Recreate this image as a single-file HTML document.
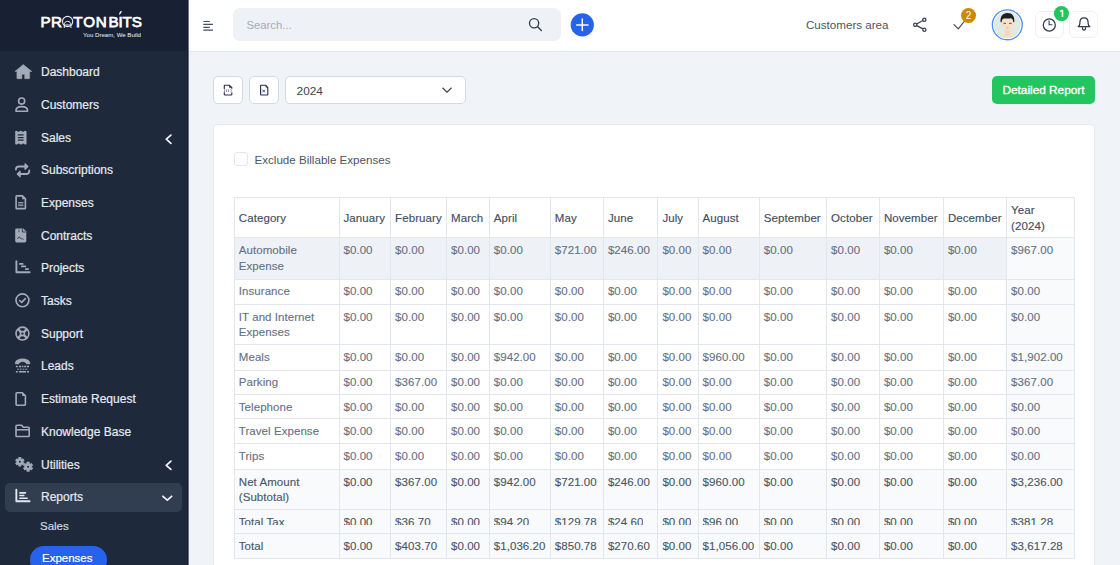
<!DOCTYPE html>
<html><head><meta charset="utf-8">
<style>
*{box-sizing:border-box;margin:0;padding:0}
html,body{width:1120px;height:565px;overflow:hidden}
body{font-family:"Liberation Sans",sans-serif;background:#f0f3f8;position:relative;color:#475569}
.abs{position:absolute}
#sb{position:absolute;left:0;top:0;width:188px;height:565px;background:#1e293b;border-right:1px solid #172033}
#sbe{position:absolute;left:188px;top:0;width:1px;height:565px;background:#6d7483}
#logo{position:absolute;left:0;top:0;width:187px;height:51px;background:#182133}
.lg1{position:absolute;left:41px;top:12px;font-weight:bold;font-size:15px;color:#fff;line-height:18px;white-space:nowrap}
.lg2{position:absolute;left:83px;top:30.5px;font-size:6.1px;color:#f3f4f6;line-height:8px;white-space:nowrap}
.mi{position:absolute;left:0;width:188px;height:32.7px;line-height:32.7px;font-size:12px;color:#e5e9f0;white-space:nowrap}
.mi span{position:absolute;left:41px;top:0;-webkit-text-stroke:0.2px #e5e9f0}
.mi svg{position:absolute}
#rep{position:absolute;left:5px;top:483px;width:177px;height:29px;background:#313d51;border-radius:5px}
.sub{position:absolute;font-size:11.5px;color:#cfd5de;white-space:nowrap;line-height:14px;-webkit-text-stroke:0.2px currentColor}
#pill{position:absolute;left:29.5px;top:545.5px;width:77px;height:28px;border-radius:14px;background:#2563eb}
#top{position:absolute;left:189px;top:0;width:931px;height:52px;background:#fff;border-bottom:1px solid #e3e8ef}
#search{position:absolute;left:233px;top:8px;width:327.5px;height:33px;background:#eef1f6;border-radius:7px}
.ph{position:absolute;left:246.5px;top:18px;font-size:11.3px;color:#a3abba;line-height:14px}
.tbtn{position:absolute;top:76px;height:27.5px;background:#fff;border:1px solid #d5dbe5;border-radius:5px}
#card{position:absolute;left:213px;top:124px;width:881.5px;height:460px;background:#fff;border:1px solid #e6eaf0;border-radius:4px}
.vl{width:1px;background:#e2e7ee}
.hl{height:1px;background:#e2e7ee}
.th{position:absolute;-webkit-text-stroke:0.15px currentColor;font-size:11.5px;letter-spacing:0.08px;line-height:16px;color:#434e5e;white-space:nowrap}
.td{position:absolute;-webkit-text-stroke:0.12px currentColor;font-size:11.5px;letter-spacing:0.06px;line-height:15.5px;color:#667184;white-space:nowrap}
.td.dk{color:#4a5566}
.clip{height:10px;overflow:hidden}
.badge{position:absolute;border-radius:50%;color:#fff;font-size:10px;text-align:center}
</style></head><body>
<div id="sb">
  <div id="logo">
    <svg class="abs" style="left:0;top:0" width="188" height="51" viewBox="0 0 188 51"><g font-family="Liberation Sans" font-size="15.2" fill="#fff" stroke="#fff" stroke-width="0.75"><text y="26.8" x="40.4 50.9">PR</text><text y="26.8" x="73.2 83.2 95.7 108.6 118.6 122.6 131.8">TONBITS</text></g><path d="M119.5 14.3 Q119.8 12 121.2 11.1 Q121.4 13.2 119.5 14.3Z" fill="#fff" stroke="#fff" stroke-width="0.8" stroke-linejoin="round"/><circle cx="67.6" cy="21.5" r="5.1" fill="none" stroke="#e6e9ee" stroke-width="1.1"/><path d="M64.3 28 V24.8 C64.3 22.6 65.6 21.4 67.6 21.4 C69.6 21.4 70.9 22.6 70.9 24.8 V28 M64.5 25 H70.7" fill="none" stroke="#e6e9ee" stroke-width="1"/></svg>
    <div class="lg2">You Dream, We Build</div>
  </div>
  <div id="rep"></div>
<div class="mi" style="top:56.10px"><svg width="188" height="33" viewBox="0 56.10 188 33" style="left:0;top:0"><path d="M23.26 64.7 L31.9 71.6 H29.6 V78.3 Q29.6 78.8 29.1 78.8 H24.7 V74.4 H21.9 V78.8 H17.4 Q16.9 78.8 16.9 78.3 V71.6 H14.9 Z" fill="#a3abb8" stroke="#a3abb8" stroke-width="0.5" stroke-linejoin="round"/></svg><span>Dashboard</span></div>
<div class="mi" style="top:88.80px"><svg width="188" height="33" viewBox="0 88.80 188 33" style="left:0;top:0"><circle cx="21.65" cy="100.85" r="3.05" fill="none" stroke="#a3abb8" stroke-width="1.6"/><path d="M16 111 V110.2 C16 107.6 18.5 106.4 21.7 106.4 C24.9 106.4 27.5 107.6 27.5 110.2 V111 Z" fill="none" stroke="#a3abb8" stroke-width="1.6" stroke-linejoin="round"/></svg><span>Customers</span></div>
<div class="mi" style="top:121.50px"><svg width="188" height="33" viewBox="0 121.50 188 33" style="left:0;top:0"><path d="M15.2 130.8 Q16.3 129.8 17.4 130.8 Q18.5 131.8 19.6 130.8 Q20.7 129.8 21.8 130.8 Q22.9 131.8 24 130.8 Q25.2 129.8 26.5 130.8 V143.6 Q25.4 144.6 24.3 143.6 Q23.2 142.6 22.1 143.6 Q21 144.6 19.9 143.6 Q18.8 142.6 17.7 143.6 Q16.5 144.6 15.2 143.6 Z" fill="#a3abb8"/><path d="M18.2 134.4 H23.2 M18.2 137.1 H23.2 M18.2 139.6 H23.2" stroke="#1e293b" stroke-width="1.2" stroke-linecap="round"/><path d="M170.9 134.6 L166.3 138.7 L170.9 142.8" fill="none" stroke="#eef1f5" stroke-width="1.8" stroke-linecap="round" stroke-linejoin="round"/></svg><span>Sales</span></div>
<div class="mi" style="top:154.20px"><svg width="188" height="33" viewBox="0 154.20 188 33" style="left:0;top:0"><path d="M15.9 169.8 C15.9 167.8 17 166.7 19 166.7 H25.5 M29.3 170.6 C29.3 172.8 28.2 174.2 26.2 174.2 H19.6" fill="none" stroke="#a3abb8" stroke-width="1.8" stroke-linecap="round" stroke-linejoin="round"/><path d="M25 163.9 L27.9 166.7 L25 169.5 Z M20.1 171.4 L17.3 174.2 L20.1 177 Z" fill="#a3abb8" stroke="#a3abb8" stroke-width="1.1" stroke-linejoin="round"/></svg><span>Subscriptions</span></div>
<div class="mi" style="top:186.90px"><svg width="188" height="33" viewBox="0 186.90 188 33" style="left:0;top:0"><path d="M16.1 196.5 Q16.1 195.8 16.8 195.8 H22.4 L25.4 198.8 V207.8 Q25.4 208.5 24.7 208.5 H16.8 Q16.1 208.5 16.1 207.8 Z" fill="none" stroke="#a3abb8" stroke-width="1.6" stroke-linejoin="round"/><path d="M22.2 195.8 V199.1 H25.4 Z" fill="#a3abb8"/><path d="M18.1 202.4 H23.4 M18.1 204 H23.4 M18.1 205.6 H23.4" stroke="#a3abb8" stroke-width="0.9"/></svg><span>Expenses</span></div>
<div class="mi" style="top:219.60px"><svg width="188" height="33" viewBox="0 219.60 188 33" style="left:0;top:0"><path d="M16.6 228 H23.3 L26.3 231.2 V240.6 Q26.3 242 24.9 242 H16.6 Q15.2 242 15.2 240.6 V229.4 Q15.2 228 16.6 228 Z" fill="#a3abb8"/><path d="M22.4 228.4 V231.6 H25.9" fill="none" stroke="#1e293b" stroke-width="0.8"/><path d="M17.4 238.6 Q18.6 236 19.5 236.5 Q20.4 238.5 21.5 238.4 Q22.6 238.2 23.6 238.9" fill="none" stroke="#1e293b" stroke-width="0.8"/><path d="M18.3 229.7 H19.5 M18.3 231.3 H19.5" stroke="#1e293b" stroke-width="0.7"/></svg><span>Contracts</span></div>
<div class="mi" style="top:252.30px"><svg width="188" height="33" viewBox="0 252.30 188 33" style="left:0;top:0"><path d="M16.4 261.4 V272.6 H29.6" fill="none" stroke="#a3abb8" stroke-width="1.9" stroke-linecap="round" stroke-linejoin="round"/><path d="M19.8 264.2 H22.7 M21.8 266.7 H25.3 M25.8 269.4 H28.1" stroke="#a3abb8" stroke-width="1.8" stroke-linecap="round"/></svg><span>Projects</span></div>
<div class="mi" style="top:285.00px"><svg width="188" height="33" viewBox="0 285.00 188 33" style="left:0;top:0"><circle cx="22.45" cy="300.35" r="6.45" fill="none" stroke="#a3abb8" stroke-width="1.6"/><path d="M19.6 300.5 L21.7 302.4 L25.3 298.6" fill="none" stroke="#a3abb8" stroke-width="1.6" stroke-linecap="round" stroke-linejoin="round"/></svg><span>Tasks</span></div>
<div class="mi" style="top:317.70px"><svg width="188" height="33" viewBox="0 317.70 188 33" style="left:0;top:0"><circle cx="22.45" cy="333.3" r="6.45" fill="none" stroke="#a3abb8" stroke-width="1.6"/><circle cx="22.45" cy="333.3" r="2" fill="none" stroke="#a3abb8" stroke-width="1.6"/><path d="M17.9 328.75 L21 331.85 M27 328.75 L23.9 331.85 M17.9 337.85 L21 334.75 M27 337.85 L23.9 334.75" stroke="#a3abb8" stroke-width="2.3"/></svg><span>Support</span></div>
<div class="mi" style="top:350.40px"><svg width="188" height="33" viewBox="0 350.40 188 33" style="left:0;top:0"><path d="M15.2 363.8 C15.2 360.8 18.5 359.2 22.6 359.2 C26.7 359.2 30 360.8 30 363.8 V364.3 H26.6 L25.7 363.4 C25.2 362.6 24 362.1 22.6 362.1 C21.2 362.1 20 362.6 19.5 363.4 L18.6 364.3 H15.2 Z" fill="#a3abb8" stroke="#a3abb8" stroke-width="0.4" stroke-linejoin="round"/><path d="M15.9 367 H17.7 M18.8 367 H21.2 M21.9 367 H23.4 M24.1 367 H26.3 M27 367 H29 M15.9 372.1 H17.7 M18.8 372.1 H26.1 M27 372.1 H29" stroke="#a3abb8" stroke-width="1.5"/><path d="M17.2 369.6 H19.2 M19.9 369.6 H21.7 M22.5 369.6 H24.3 M25.1 369.6 H27.2" stroke="#a3abb8" stroke-width="0.9"/></svg><span>Leads</span></div>
<div class="mi" style="top:383.10px"><svg width="188" height="33" viewBox="0 383.10 188 33" style="left:0;top:0"><path d="M16.1 393.5 Q16.1 392.8 16.8 392.8 H22.4 L25.4 395.8 V404.6 Q25.4 405.3 24.7 405.3 H16.8 Q16.1 405.3 16.1 404.6 Z" fill="none" stroke="#a3abb8" stroke-width="1.6" stroke-linejoin="round"/><path d="M22.2 392.8 V396.1 H25.4 Z" fill="#a3abb8"/></svg><span>Estimate Request</span></div>
<div class="mi" style="top:415.80px"><svg width="188" height="33" viewBox="0 415.80 188 33" style="left:0;top:0"><path d="M16 426 Q16 425 17 425 H21.6 L23.3 427 H28.4 Q29.2 427 29.2 427.8 V435.5 Q29.2 436.3 28.4 436.3 H16.8 Q16 436.3 16 435.5 Z" fill="none" stroke="#a3abb8" stroke-width="1.6" stroke-linejoin="round"/><path d="M16 429.6 H29.2" stroke="#a3abb8" stroke-width="1.5"/></svg><span>Knowledge Base</span></div>
<div class="mi" style="top:448.50px"><svg width="188" height="33" viewBox="0 448.50 188 33" style="left:0;top:0"><path d="M18.86 458.36 L18.72 457.05 L21.00 457.05 L20.86 458.36 L21.41 458.62 L21.90 458.97 L22.97 458.19 L24.11 460.16 L22.90 460.70 L22.96 461.30 L22.90 461.90 L24.11 462.44 L22.97 464.41 L21.90 463.63 L21.41 463.98 L20.86 464.24 L21.00 465.55 L18.72 465.55 L18.86 464.24 L18.31 463.98 L17.82 463.63 L16.75 464.41 L15.61 462.44 L16.82 461.90 L16.76 461.30 L16.82 460.70 L15.61 460.16 L16.75 458.19 L17.82 458.97 L18.31 458.62 Z" fill="#a3abb8" stroke="#a3abb8" stroke-width="0.9" stroke-linejoin="round"/><circle cx="19.86" cy="461.3" r="0.95" fill="#1e293b"/><path d="M27.04 463.08 L26.88 461.66 L29.32 461.66 L29.16 463.08 L29.75 463.34 L30.28 463.72 L31.42 462.88 L32.64 464.98 L31.34 465.56 L31.40 466.20 L31.34 466.84 L32.64 467.42 L31.42 469.52 L30.28 468.68 L29.75 469.06 L29.16 469.32 L29.32 470.74 L26.88 470.74 L27.04 469.32 L26.45 469.06 L25.92 468.68 L24.78 469.52 L23.56 467.42 L24.86 466.84 L24.80 466.20 L24.86 465.56 L23.56 464.98 L24.78 462.88 L25.92 463.72 L26.45 463.34 Z" fill="#a3abb8" stroke="#a3abb8" stroke-width="0.9" stroke-linejoin="round"/><circle cx="28.1" cy="466.2" r="1" fill="#1e293b"/><g transform="translate(0 326.1)"><path d="M170.9 134.6 L166.3 138.7 L170.9 142.8" fill="none" stroke="#eef1f5" stroke-width="1.8" stroke-linecap="round" stroke-linejoin="round"/></g></svg><span>Utilities</span></div>
<div class="mi" style="top:481.20px"><svg width="188" height="33" viewBox="0 481.20 188 33" style="left:0;top:0"><path d="M16.35 489.9 V501.4 H29.6" fill="none" stroke="#e3e7ed" stroke-width="1.9" stroke-linecap="round" stroke-linejoin="round"/><path d="M19.9 493.1 H25.4 M19.9 495.7 H23.8 M19.9 498.4 H27.1" stroke="#e3e7ed" stroke-width="1.6" stroke-linecap="round"/><path d="M162.9 496.5 L167.3 500.4 L171.6 496.5" fill="none" stroke="#eef1f5" stroke-width="1.8" stroke-linecap="round" stroke-linejoin="round"/></svg><span>Reports</span></div>
  <div class="sub" style="left:40px;top:519px">Sales</div>
  <div id="pill"></div>
  <div class="sub" style="left:42px;top:551px;color:#fff">Expenses</div>
</div>
<div id="sbe"></div>
<div id="top"></div>
<svg class="abs" style="left:203px;top:20px" width="11" height="12" viewBox="0 0 11 12"><path d="M0.3 1.5 H6.8 M0.3 4.4 H10 M0.3 7.4 H6.8 M0.3 10.1 H10" stroke="#465063" stroke-width="1.2"/></svg>
<div id="search"></div>
<div class="ph">Search...</div>
<svg class="abs" style="left:527px;top:17px" width="16" height="16" viewBox="0 0 16 16"><circle cx="7.1" cy="6.2" r="4.6" fill="none" stroke="#333c4a" stroke-width="1.35"/><path d="M10.5 9.6 L14.3 13.4" stroke="#333c4a" stroke-width="1.4" stroke-linecap="round"/></svg>
<svg class="abs" style="left:570px;top:12.5px" width="25" height="25" viewBox="0 0 25 25"><circle cx="12.3" cy="11.9" r="11.6" fill="#2563eb"/><path d="M12.3 6 V17.6 M6.7 11.9 H18" stroke="#fff" stroke-width="1.5" stroke-linecap="round"/></svg>
<div class="abs" style="left:806px;top:18px;font-size:11.6px;line-height:14px;color:#4b5563;white-space:nowrap">Customers area</div>
<svg class="abs" style="left:912px;top:16.5px" width="16" height="16" viewBox="0 0 16 16"><circle cx="12.35" cy="2.7" r="1.6" fill="none" stroke="#3b4352" stroke-width="1.3"/><circle cx="3.2" cy="7.8" r="1.6" fill="none" stroke="#3b4352" stroke-width="1.3"/><circle cx="12.35" cy="12.7" r="1.6" fill="none" stroke="#3b4352" stroke-width="1.3"/><path d="M4.7 7 L10.9 3.5 M4.7 8.6 L10.9 11.9" stroke="#3b4352" stroke-width="1.3"/></svg>
<svg class="abs" style="left:952px;top:19px" width="14" height="12" viewBox="0 0 14 12"><path d="M2 5.6 L6.3 9.9 L13 1.5" fill="none" stroke="#3b4352" stroke-width="1.15" stroke-linecap="round" stroke-linejoin="round"/></svg>
<div class="badge" style="left:961px;top:8px;width:15px;height:15px;line-height:15px;background:#ca8a04">2</div>
<svg class="abs" style="left:990.5px;top:8.5px" width="32" height="32" viewBox="0 0 32 32"><defs><clipPath id="av"><circle cx="16.3" cy="15.8" r="13.4"/></clipPath></defs><circle cx="16.3" cy="15.8" r="14.95" fill="#fff" stroke="#4d8ef5" stroke-width="1.3"/><g clip-path="url(#av)"><rect x="0" y="0" width="32" height="32" fill="#dfeae6"/><path d="M5 32 C5.5 26.5 9.5 24.2 16.5 24.2 C23.5 24.2 27.5 26.5 28 32 Z" fill="#f5e1c8"/><path d="M14 20 H19 V26 Q16.5 27.5 14 26 Z" fill="#f0d6bb"/><path d="M10.6 9 V12.5 C10.6 18.5 13 21.6 16.6 21.6 C20.2 21.6 22.6 18.5 22.6 12.5 V9 Z" fill="#f6e0c6"/><path d="M9.6 13.2 C9 7.5 11.5 3.9 16.4 3.9 C21.3 3.9 23.8 7.2 23.3 13 L22.3 13.2 C22 10.8 21.4 9.6 20 9.3 C18 9.7 15 9.6 12.8 9.4 C11.4 9.8 10.8 11 10.6 13.3 Z" fill="#1f1f22"/><path d="M12.6 14.6 Q13.6 13.9 14.8 14.5 M18.2 14.5 Q19.4 13.9 20.5 14.6" fill="none" stroke="#3a3530" stroke-width="1"/><path d="M15.6 18.6 Q16.5 19.2 17.5 18.6" fill="none" stroke="#b9a595" stroke-width="0.8"/></g></svg>
<div class="abs" style="left:1035px;top:11px;width:29px;height:27px;border:1px solid #eef1f5;border-radius:6px;background:#fff"></div>
<svg class="abs" style="left:1041px;top:16.5px" width="16" height="16" viewBox="0 0 16 16"><circle cx="8.3" cy="8" r="6.05" fill="none" stroke="#313a48" stroke-width="1.25"/><path d="M8.1 3.6 V7.8 H11.3" fill="none" stroke="#313a48" stroke-width="1.1"/></svg>
<svg class="abs" style="left:1053px;top:5px" width="18" height="18" viewBox="1053 5 18 18"><circle cx="1061.45" cy="13.55" r="7.55" fill="#22c55e"/><path d="M1060 11.4 L1062.5 10.2 V17" fill="none" stroke="#fff" stroke-width="1.5" stroke-linejoin="round"/></svg>
<div class="abs" style="left:1069px;top:11px;width:29px;height:27px;border:1px solid #eef1f5;border-radius:6px;background:#fff"></div>
<svg class="abs" style="left:1076px;top:16px" width="16" height="16" viewBox="0 0 16 16"><path d="M2.2 10.6 Q3.9 9.6 3.9 7.3 V6.4 C3.9 3.6 5.7 1.9 8 1.9 C10.3 1.9 12.1 3.6 12.1 6.4 V7.3 Q12.1 9.6 13.8 10.6 Z" fill="none" stroke="#313a48" stroke-width="1.25" stroke-linejoin="round"/><path d="M6.4 11.2 Q6.4 14.2 8 14.2 Q9.6 14.2 9.6 11.2" fill="none" stroke="#313a48" stroke-width="1.2"/></svg>

<div class="tbtn" style="left:213px;width:29.5px"></div>
<svg class="abs" style="left:222px;top:83px" width="12" height="14" viewBox="0 0 12 14"><path d="M2.3 6 V2.6 Q2.3 2.2 2.8 2.2 H7.3 L9.8 4.6 V5.8 M2.3 9.3 V11.6 Q2.3 12 2.8 12 H9.3 Q9.8 12 9.8 11.6 V9.6" fill="none" stroke="#263152" stroke-width="1.15"/><path d="M7.2 2.2 V4.8 H9.9 Z" fill="#263152"/><path d="M2.6 6.3 V9 M4.6 6.3 V9 M6.6 6.3 V9 M8.4 6.3 L9.9 7.6 L8.4 9" fill="none" stroke="#8d7aa6" stroke-width="0.9"/></svg>
<div class="tbtn" style="left:249px;width:29.5px"></div>
<svg class="abs" style="left:258px;top:83px" width="12" height="14" viewBox="0 0 12 14"><path d="M2.6 2.6 Q2.6 2.2 3.1 2.2 H7.8 L9.8 4.4 V11.6 Q9.8 12 9.3 12 H3.1 Q2.6 12 2.6 11.6 Z" fill="none" stroke="#263152" stroke-width="1.15"/><path d="M7.6 2.2 V4.6 H9.9 Z" fill="#263152"/><path d="M4.4 6.7 L7 9.3 M7 6.7 L4.4 9.3" stroke="#3d4a7a" stroke-width="1"/></svg>
<div class="tbtn" style="left:285px;width:180.5px"></div>
<div class="abs" style="left:296.6px;top:83.8px;font-size:11.8px;line-height:14px;color:#3b4554">2024</div>
<svg class="abs" style="left:441px;top:85px" width="12" height="10" viewBox="0 0 12 10"><path d="M1.5 2.8 L6 7.2 L10.5 2.8" fill="none" stroke="#404a58" stroke-width="1.3"/></svg>
<div class="abs" style="left:992px;top:76px;width:103px;height:28px;border-radius:5px;background:#22c55e"></div>
<div class="abs" style="left:1002.5px;top:83.2px;font-size:11.8px;-webkit-text-stroke:0.35px #fff;line-height:14px;color:#fff;white-space:nowrap">Detailed Report</div>

<div id="card"></div>
<div class="abs" style="left:233.5px;top:151.7px;width:14px;height:14px;border:1px solid #e3e7ed;border-radius:3px;background:#fff"></div>
<div class="abs" style="left:254.5px;top:153px;font-size:11.6px;line-height:14px;color:#4b5563;white-space:nowrap">Exclude Billable Expenses</div>
<div class="abs" style="left:234.3px;top:237.9px;width:840.1000000000001px;height:41.20000000000002px;background:#eef2f7"></div>
<div class="abs" style="left:1006.6px;top:237.9px;width:67.80000000000007px;height:41.20000000000002px;background:#f8fafc"></div>
<div class="abs" style="left:1006.6px;top:279.1px;width:67.80000000000007px;height:25.099999999999966px;background:#f8fafc"></div>
<div class="abs" style="left:1006.6px;top:304.2px;width:67.80000000000007px;height:40.10000000000002px;background:#f8fafc"></div>
<div class="abs" style="left:1006.6px;top:344.3px;width:67.80000000000007px;height:25.69999999999999px;background:#f8fafc"></div>
<div class="abs" style="left:1006.6px;top:370px;width:67.80000000000007px;height:24.600000000000023px;background:#f8fafc"></div>
<div class="abs" style="left:1006.6px;top:394.6px;width:67.80000000000007px;height:24.19999999999999px;background:#f8fafc"></div>
<div class="abs" style="left:1006.6px;top:418.8px;width:67.80000000000007px;height:24.599999999999966px;background:#f8fafc"></div>
<div class="abs" style="left:1006.6px;top:443.4px;width:67.80000000000007px;height:25.80000000000001px;background:#f8fafc"></div>
<div class="abs" style="left:234.3px;top:469.2px;width:840.1000000000001px;height:40.5px;background:#f8fafc"></div>
<div class="abs" style="left:234.3px;top:509.7px;width:840.1000000000001px;height:24.000000000000057px;background:#f8fafc"></div>
<div class="abs" style="left:234.3px;top:533.7px;width:840.1000000000001px;height:24.59999999999991px;background:#f8fafc"></div>
<div class="abs vl" style="left:233.8px;top:196.8px;height:361.99999999999994px"></div>
<div class="abs vl" style="left:338.5px;top:196.8px;height:361.99999999999994px"></div>
<div class="abs vl" style="left:390.1px;top:196.8px;height:361.99999999999994px"></div>
<div class="abs vl" style="left:446.0px;top:196.8px;height:361.99999999999994px"></div>
<div class="abs vl" style="left:488.8px;top:196.8px;height:361.99999999999994px"></div>
<div class="abs vl" style="left:549.8px;top:196.8px;height:361.99999999999994px"></div>
<div class="abs vl" style="left:602.9px;top:196.8px;height:361.99999999999994px"></div>
<div class="abs vl" style="left:657.4px;top:196.8px;height:361.99999999999994px"></div>
<div class="abs vl" style="left:697.6px;top:196.8px;height:361.99999999999994px"></div>
<div class="abs vl" style="left:758.8px;top:196.8px;height:361.99999999999994px"></div>
<div class="abs vl" style="left:826.1px;top:196.8px;height:361.99999999999994px"></div>
<div class="abs vl" style="left:878.9px;top:196.8px;height:361.99999999999994px"></div>
<div class="abs vl" style="left:942.9px;top:196.8px;height:361.99999999999994px"></div>
<div class="abs vl" style="left:1006.1px;top:196.8px;height:361.99999999999994px"></div>
<div class="abs vl" style="left:1073.9px;top:196.8px;height:361.99999999999994px"></div>
<div class="abs hl" style="left:233.8px;top:196.8px;width:841.1px"></div>
<div class="abs hl" style="left:233.8px;top:237.4px;width:841.1px"></div>
<div class="abs hl" style="left:233.8px;top:278.6px;width:841.1px"></div>
<div class="abs hl" style="left:233.8px;top:303.7px;width:841.1px"></div>
<div class="abs hl" style="left:233.8px;top:343.8px;width:841.1px"></div>
<div class="abs hl" style="left:233.8px;top:369.5px;width:841.1px"></div>
<div class="abs hl" style="left:233.8px;top:394.1px;width:841.1px"></div>
<div class="abs hl" style="left:233.8px;top:418.3px;width:841.1px"></div>
<div class="abs hl" style="left:233.8px;top:442.9px;width:841.1px"></div>
<div class="abs hl" style="left:233.8px;top:468.7px;width:841.1px"></div>
<div class="abs hl" style="left:233.8px;top:509.2px;width:841.1px"></div>
<div class="abs hl" style="left:233.8px;top:533.2px;width:841.1px"></div>
<div class="abs hl" style="left:233.8px;top:557.8px;width:841.1px"></div>
<div class="th" style="left:238.8px;top:209.9px">Category</div>
<div class="th" style="left:343.5px;top:209.9px">January</div>
<div class="th" style="left:395.1px;top:209.9px">February</div>
<div class="th" style="left:451.0px;top:209.9px">March</div>
<div class="th" style="left:493.8px;top:209.9px">April</div>
<div class="th" style="left:554.8px;top:209.9px">May</div>
<div class="th" style="left:607.9px;top:209.9px">June</div>
<div class="th" style="left:662.4px;top:209.9px">July</div>
<div class="th" style="left:702.6px;top:209.9px">August</div>
<div class="th" style="left:763.8px;top:209.9px">September</div>
<div class="th" style="left:831.1px;top:209.9px">October</div>
<div class="th" style="left:883.9px;top:209.9px">November</div>
<div class="th" style="left:947.9px;top:209.9px">December</div>
<div class="th" style="left:1011.1px;top:201.9px">Year<br>(2024)</div>
<div class="td" style="left:238.8px;top:243.2px">Automobile<br>Expense</div>
<div class="td" style="left:343.5px;top:243.2px">$0.00</div>
<div class="td" style="left:395.1px;top:243.2px">$0.00</div>
<div class="td" style="left:451.0px;top:243.2px">$0.00</div>
<div class="td" style="left:493.8px;top:243.2px">$0.00</div>
<div class="td" style="left:554.8px;top:243.2px">$721.00</div>
<div class="td" style="left:607.9px;top:243.2px">$246.00</div>
<div class="td" style="left:662.4px;top:243.2px">$0.00</div>
<div class="td" style="left:702.6px;top:243.2px">$0.00</div>
<div class="td" style="left:763.8px;top:243.2px">$0.00</div>
<div class="td" style="left:831.1px;top:243.2px">$0.00</div>
<div class="td" style="left:883.9px;top:243.2px">$0.00</div>
<div class="td" style="left:947.9px;top:243.2px">$0.00</div>
<div class="td" style="left:1011.1px;top:243.2px">$967.00</div>
<div class="td" style="left:238.8px;top:284.4px">Insurance</div>
<div class="td" style="left:343.5px;top:284.4px">$0.00</div>
<div class="td" style="left:395.1px;top:284.4px">$0.00</div>
<div class="td" style="left:451.0px;top:284.4px">$0.00</div>
<div class="td" style="left:493.8px;top:284.4px">$0.00</div>
<div class="td" style="left:554.8px;top:284.4px">$0.00</div>
<div class="td" style="left:607.9px;top:284.4px">$0.00</div>
<div class="td" style="left:662.4px;top:284.4px">$0.00</div>
<div class="td" style="left:702.6px;top:284.4px">$0.00</div>
<div class="td" style="left:763.8px;top:284.4px">$0.00</div>
<div class="td" style="left:831.1px;top:284.4px">$0.00</div>
<div class="td" style="left:883.9px;top:284.4px">$0.00</div>
<div class="td" style="left:947.9px;top:284.4px">$0.00</div>
<div class="td" style="left:1011.1px;top:284.4px">$0.00</div>
<div class="td" style="left:238.8px;top:309.5px">IT and Internet<br>Expenses</div>
<div class="td" style="left:343.5px;top:309.5px">$0.00</div>
<div class="td" style="left:395.1px;top:309.5px">$0.00</div>
<div class="td" style="left:451.0px;top:309.5px">$0.00</div>
<div class="td" style="left:493.8px;top:309.5px">$0.00</div>
<div class="td" style="left:554.8px;top:309.5px">$0.00</div>
<div class="td" style="left:607.9px;top:309.5px">$0.00</div>
<div class="td" style="left:662.4px;top:309.5px">$0.00</div>
<div class="td" style="left:702.6px;top:309.5px">$0.00</div>
<div class="td" style="left:763.8px;top:309.5px">$0.00</div>
<div class="td" style="left:831.1px;top:309.5px">$0.00</div>
<div class="td" style="left:883.9px;top:309.5px">$0.00</div>
<div class="td" style="left:947.9px;top:309.5px">$0.00</div>
<div class="td" style="left:1011.1px;top:309.5px">$0.00</div>
<div class="td" style="left:238.8px;top:349.6px">Meals</div>
<div class="td" style="left:343.5px;top:349.6px">$0.00</div>
<div class="td" style="left:395.1px;top:349.6px">$0.00</div>
<div class="td" style="left:451.0px;top:349.6px">$0.00</div>
<div class="td" style="left:493.8px;top:349.6px">$942.00</div>
<div class="td" style="left:554.8px;top:349.6px">$0.00</div>
<div class="td" style="left:607.9px;top:349.6px">$0.00</div>
<div class="td" style="left:662.4px;top:349.6px">$0.00</div>
<div class="td" style="left:702.6px;top:349.6px">$960.00</div>
<div class="td" style="left:763.8px;top:349.6px">$0.00</div>
<div class="td" style="left:831.1px;top:349.6px">$0.00</div>
<div class="td" style="left:883.9px;top:349.6px">$0.00</div>
<div class="td" style="left:947.9px;top:349.6px">$0.00</div>
<div class="td" style="left:1011.1px;top:349.6px">$1,902.00</div>
<div class="td" style="left:238.8px;top:375.3px">Parking</div>
<div class="td" style="left:343.5px;top:375.3px">$0.00</div>
<div class="td" style="left:395.1px;top:375.3px">$367.00</div>
<div class="td" style="left:451.0px;top:375.3px">$0.00</div>
<div class="td" style="left:493.8px;top:375.3px">$0.00</div>
<div class="td" style="left:554.8px;top:375.3px">$0.00</div>
<div class="td" style="left:607.9px;top:375.3px">$0.00</div>
<div class="td" style="left:662.4px;top:375.3px">$0.00</div>
<div class="td" style="left:702.6px;top:375.3px">$0.00</div>
<div class="td" style="left:763.8px;top:375.3px">$0.00</div>
<div class="td" style="left:831.1px;top:375.3px">$0.00</div>
<div class="td" style="left:883.9px;top:375.3px">$0.00</div>
<div class="td" style="left:947.9px;top:375.3px">$0.00</div>
<div class="td" style="left:1011.1px;top:375.3px">$367.00</div>
<div class="td" style="left:238.8px;top:399.9px">Telephone</div>
<div class="td" style="left:343.5px;top:399.9px">$0.00</div>
<div class="td" style="left:395.1px;top:399.9px">$0.00</div>
<div class="td" style="left:451.0px;top:399.9px">$0.00</div>
<div class="td" style="left:493.8px;top:399.9px">$0.00</div>
<div class="td" style="left:554.8px;top:399.9px">$0.00</div>
<div class="td" style="left:607.9px;top:399.9px">$0.00</div>
<div class="td" style="left:662.4px;top:399.9px">$0.00</div>
<div class="td" style="left:702.6px;top:399.9px">$0.00</div>
<div class="td" style="left:763.8px;top:399.9px">$0.00</div>
<div class="td" style="left:831.1px;top:399.9px">$0.00</div>
<div class="td" style="left:883.9px;top:399.9px">$0.00</div>
<div class="td" style="left:947.9px;top:399.9px">$0.00</div>
<div class="td" style="left:1011.1px;top:399.9px">$0.00</div>
<div class="td" style="left:238.8px;top:424.1px">Travel Expense</div>
<div class="td" style="left:343.5px;top:424.1px">$0.00</div>
<div class="td" style="left:395.1px;top:424.1px">$0.00</div>
<div class="td" style="left:451.0px;top:424.1px">$0.00</div>
<div class="td" style="left:493.8px;top:424.1px">$0.00</div>
<div class="td" style="left:554.8px;top:424.1px">$0.00</div>
<div class="td" style="left:607.9px;top:424.1px">$0.00</div>
<div class="td" style="left:662.4px;top:424.1px">$0.00</div>
<div class="td" style="left:702.6px;top:424.1px">$0.00</div>
<div class="td" style="left:763.8px;top:424.1px">$0.00</div>
<div class="td" style="left:831.1px;top:424.1px">$0.00</div>
<div class="td" style="left:883.9px;top:424.1px">$0.00</div>
<div class="td" style="left:947.9px;top:424.1px">$0.00</div>
<div class="td" style="left:1011.1px;top:424.1px">$0.00</div>
<div class="td" style="left:238.8px;top:448.7px">Trips</div>
<div class="td" style="left:343.5px;top:448.7px">$0.00</div>
<div class="td" style="left:395.1px;top:448.7px">$0.00</div>
<div class="td" style="left:451.0px;top:448.7px">$0.00</div>
<div class="td" style="left:493.8px;top:448.7px">$0.00</div>
<div class="td" style="left:554.8px;top:448.7px">$0.00</div>
<div class="td" style="left:607.9px;top:448.7px">$0.00</div>
<div class="td" style="left:662.4px;top:448.7px">$0.00</div>
<div class="td" style="left:702.6px;top:448.7px">$0.00</div>
<div class="td" style="left:763.8px;top:448.7px">$0.00</div>
<div class="td" style="left:831.1px;top:448.7px">$0.00</div>
<div class="td" style="left:883.9px;top:448.7px">$0.00</div>
<div class="td" style="left:947.9px;top:448.7px">$0.00</div>
<div class="td" style="left:1011.1px;top:448.7px">$0.00</div>
<div class="td dk" style="left:238.8px;top:474.5px">Net Amount<br>(Subtotal)</div>
<div class="td dk" style="left:343.5px;top:474.5px">$0.00</div>
<div class="td dk" style="left:395.1px;top:474.5px">$367.00</div>
<div class="td dk" style="left:451.0px;top:474.5px">$0.00</div>
<div class="td dk" style="left:493.8px;top:474.5px">$942.00</div>
<div class="td dk" style="left:554.8px;top:474.5px">$721.00</div>
<div class="td dk" style="left:607.9px;top:474.5px">$246.00</div>
<div class="td dk" style="left:662.4px;top:474.5px">$0.00</div>
<div class="td dk" style="left:702.6px;top:474.5px">$960.00</div>
<div class="td dk" style="left:763.8px;top:474.5px">$0.00</div>
<div class="td dk" style="left:831.1px;top:474.5px">$0.00</div>
<div class="td dk" style="left:883.9px;top:474.5px">$0.00</div>
<div class="td dk" style="left:947.9px;top:474.5px">$0.00</div>
<div class="td dk" style="left:1011.1px;top:474.5px">$3,236.00</div>
<div class="td dk clip" style="left:238.8px;top:515.0px">Total Tax</div>
<div class="td dk clip" style="left:343.5px;top:515.0px">$0.00</div>
<div class="td dk clip" style="left:395.1px;top:515.0px">$36.70</div>
<div class="td dk clip" style="left:451.0px;top:515.0px">$0.00</div>
<div class="td dk clip" style="left:493.8px;top:515.0px">$94.20</div>
<div class="td dk clip" style="left:554.8px;top:515.0px">$129.78</div>
<div class="td dk clip" style="left:607.9px;top:515.0px">$24.60</div>
<div class="td dk clip" style="left:662.4px;top:515.0px">$0.00</div>
<div class="td dk clip" style="left:702.6px;top:515.0px">$96.00</div>
<div class="td dk clip" style="left:763.8px;top:515.0px">$0.00</div>
<div class="td dk clip" style="left:831.1px;top:515.0px">$0.00</div>
<div class="td dk clip" style="left:883.9px;top:515.0px">$0.00</div>
<div class="td dk clip" style="left:947.9px;top:515.0px">$0.00</div>
<div class="td dk clip" style="left:1011.1px;top:515.0px">$381.28</div>
<div class="td dk" style="left:238.8px;top:539.0px">Total</div>
<div class="td dk" style="left:343.5px;top:539.0px">$0.00</div>
<div class="td dk" style="left:395.1px;top:539.0px">$403.70</div>
<div class="td dk" style="left:451.0px;top:539.0px">$0.00</div>
<div class="td dk" style="left:493.8px;top:539.0px">$1,036.20</div>
<div class="td dk" style="left:554.8px;top:539.0px">$850.78</div>
<div class="td dk" style="left:607.9px;top:539.0px">$270.60</div>
<div class="td dk" style="left:662.4px;top:539.0px">$0.00</div>
<div class="td dk" style="left:702.6px;top:539.0px">$1,056.00</div>
<div class="td dk" style="left:763.8px;top:539.0px">$0.00</div>
<div class="td dk" style="left:831.1px;top:539.0px">$0.00</div>
<div class="td dk" style="left:883.9px;top:539.0px">$0.00</div>
<div class="td dk" style="left:947.9px;top:539.0px">$0.00</div>
<div class="td dk" style="left:1011.1px;top:539.0px">$3,617.28</div>
</body></html>
